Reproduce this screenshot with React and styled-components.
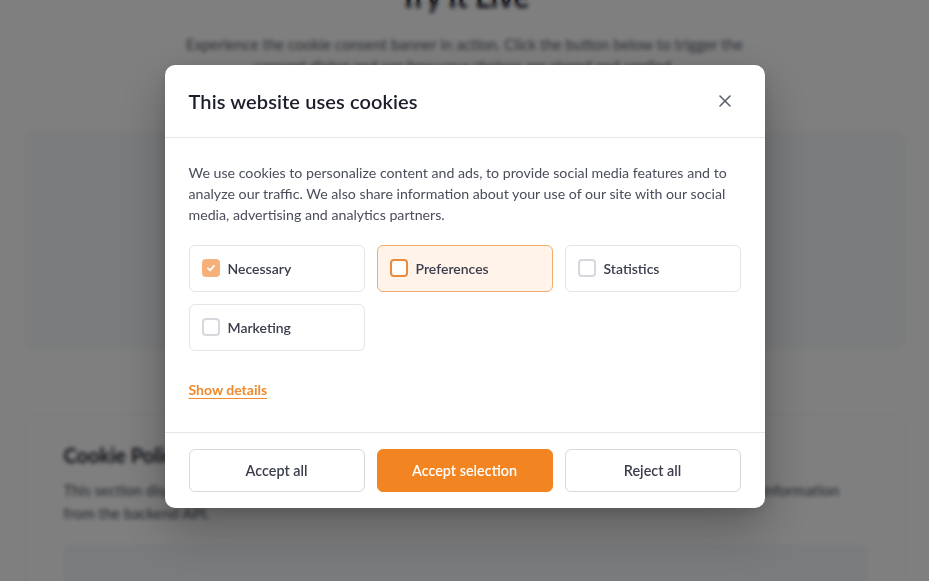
import React, { useState } from "react"
import styled, { createGlobalStyle } from "styled-components"

const GlobalStyle = createGlobalStyle`
  html, body {
    margin: 0;
    padding: 0;
    height: 100%;
    overflow: hidden;
    background: #ffffff;
    font-family: Lato, "Noto Sans", "Liberation Sans", sans-serif;
  }
`

// Page behind the dialog

const Page = styled.main`
  width: 929px;
  height: 581px;
  overflow: hidden;
  display: flex;
  flex-direction: column;
  align-items: center;
  background: #ffffff;
`

const Intro = styled.section`
  margin-top: -22px;
  display: flex;
  flex-direction: column;
  align-items: center;
  text-align: center;
`

const PageTitle = styled.h2`
  margin: 0;
  font-size: 30px;
  font-weight: 700;
  color: #1f2330;
`

const Lead = styled.p`
  margin: 19px 0 0;
  width: 600px;
  font-size: 15px;
  line-height: 22px;
  color: #5b6170;
`

const Card = styled.div`
  box-sizing: border-box;
  width: 880px;
  margin-top: ${p => p.$top || 0}px;
  height: ${p => p.$height}px;
  background: ${p => p.$tint ? "#f6f8fb" : "#ffffff"};
  border: 1px solid #eceff3;
  border-radius: 8px;
  padding: 27px 38px;
  flex-shrink: 0;
`

const CardTitle = styled.h3`
  margin: 0;
  font-size: 20px;
  line-height: 26px;
  font-weight: 700;
  color: #1f2330;
`

const CardText = styled.p`
  margin: 11px 0 0;
  font-size: 15px;
  line-height: 23px;
  color: #4b5160;
`

const InnerBox = styled.div`
  margin-top: 20px;
  height: 60px;
  background: #f4f7fa;
  border: 1px solid #e6eaef;
  border-radius: 6px;
`

// Overlay + dialog

const Overlay = styled.div`
  position: fixed;
  inset: 0;
  background: rgba(0, 0, 0, 0.5);
  backdrop-filter: blur(2px);
  display: flex;
  align-items: center;
  justify-content: center;
  padding-bottom: 9px;
  box-sizing: border-box;
`

const Dialog = styled.div`
  width: 600px;
  background: #ffffff;
  border-radius: 10px;
  box-shadow: 0 20px 50px rgba(0, 0, 0, 0.28), 0 4px 14px rgba(0, 0, 0, 0.12);
  overflow: hidden;
`

const Header = styled.header`
  height: 72px;
  padding: 0 24px;
  display: flex;
  align-items: center;
  justify-content: space-between;
  border-bottom: 1px solid #e5e7eb;
`

const Title = styled.h1`
  margin: 0;
  font-size: 20px;
  font-weight: 600;
  color: #1c1e2b;
  letter-spacing: 0.1px;
`

const CloseButton = styled.button`
  width: 24px;
  height: 24px;
  margin-right: 4px;
  padding: 0;
  border: 0;
  background: none;
  display: flex;
  align-items: center;
  justify-content: center;
  cursor: pointer;
`

const Body = styled.div`
  padding: 24px 24px 34px;
`

const Text = styled.p`
  margin: 0;
  font-size: 14.2px;
  line-height: 21px;
  color: #4a4e5a;
`

const Grid = styled.div`
  display: grid;
  grid-template-columns: repeat(3, 1fr);
  gap: 12px;
  margin-top: ${p => p.$top || 0}px;
`

const Option = styled.label`
  box-sizing: border-box;
  height: 47px;
  padding: 0 12px;
  display: flex;
  align-items: center;
  gap: 8px;
  border: 1px solid ${p => p.$active ? "#eeae6e" : "#e3e5e9"};
  background: ${p => p.$active ? "#fff3ea" : "#ffffff"};
  border-radius: 6px;
  font-size: 14px;
  font-weight: 600;
  color: #3a3d4b;
  cursor: pointer;
`

const Box = styled.span`
  box-sizing: border-box;
  width: 18px;
  height: 18px;
  border-radius: 4px;
  display: flex;
  align-items: center;
  justify-content: center;
  background: ${p => p.$checked ? "#f6b17a" : "#ffffff"};
  border: ${p => p.$checked ? "none" : `2px solid ${p.$active ? "#ec8a3a" : "#d6d8dd"}`};
`

const DetailsLink = styled.a`
  display: inline-block;
  margin-top: 30px;
  font-size: 14px;
  font-weight: 700;
  color: #f08a2c;
  text-decoration: underline;
  text-underline-offset: 3px;
  cursor: pointer;
`

const Footer = styled.footer`
  border-top: 1px solid #e5e7eb;
  padding: 16px 24px 16px;
`

const Button = styled.button`
  height: 43px;
  border-radius: 6px;
  font-family: inherit;
  font-size: 14.4px;
  font-weight: 600;
  cursor: pointer;
  border: 1px solid ${p => p.$primary ? "#f28522" : "#d6d8dd"};
  background: ${p => p.$primary ? "#f28522" : "#ffffff"};
  color: ${p => p.$primary ? "#ffffff" : "#3a3d4b"};
`

const categories = [
  { id: "necessary", label: "Necessary", locked: true },
  { id: "preferences", label: "Preferences" },
  { id: "statistics", label: "Statistics" },
  { id: "marketing", label: "Marketing" },
]

const CloseIcon = () => (
  <svg width="12" height="12" viewBox="0 0 12 12" fill="none" stroke="#5c606c" strokeWidth="1.6" strokeLinecap="round">
    <line x1="1" y1="1" x2="11" y2="11" />
    <line x1="11" y1="1" x2="1" y2="11" />
  </svg>
)

const Check = () => (
  <svg width="10" height="10" viewBox="0 0 10 10" fill="none" stroke="#ffffff" strokeWidth="1.8" strokeLinecap="round" strokeLinejoin="round">
    <polyline points="2,5.3 4.2,7.4 8,2.8" />
  </svg>
)

export default function App() {
  const [focus] = useState("preferences")

  return (
    <>
      <GlobalStyle />
      <Page>
        <Intro>
          <PageTitle>Try It Live</PageTitle>
          <Lead>
            Experience the cookie consent banner in action. Click the button below to trigger
            the consent dialog and see how your choices are stored and applied.
          </Lead>
        </Intro>
        <Card $top={55} $height={217} $tint />
        <Card $top={65} $height={200}>
          <CardTitle>Cookie Policy</CardTitle>
          <CardText>
            This section displays the current cookie policy of this website, with all its categories, loaded with the latest information
            from the backend API.
          </CardText>
          <InnerBox />
        </Card>
      </Page>

      <Overlay>
        <Dialog role="dialog" aria-label="This website uses cookies">
          <Header>
            <Title>This website uses cookies</Title>
            <CloseButton aria-label="Close">
              <CloseIcon />
            </CloseButton>
          </Header>
          <Body>
            <Text>
              We use cookies to personalize content and ads, to provide social media features and to
              analyze our traffic. We also share information about your use of our site with our social
              media, advertising and analytics partners.
            </Text>
            <Grid $top={20}>
              {categories.map(c => (
                <Option key={c.id} $active={c.id === focus}>
                  <Box $checked={c.locked} $active={c.id === focus}>
                    {c.locked && <Check />}
                  </Box>
                  {c.label}
                </Option>
              ))}
            </Grid>
            <DetailsLink>Show details</DetailsLink>
          </Body>
          <Footer>
            <Grid>
              <Button>Accept all</Button>
              <Button $primary>Accept selection</Button>
              <Button>Reject all</Button>
            </Grid>
          </Footer>
        </Dialog>
      </Overlay>
    </>
  )
}
